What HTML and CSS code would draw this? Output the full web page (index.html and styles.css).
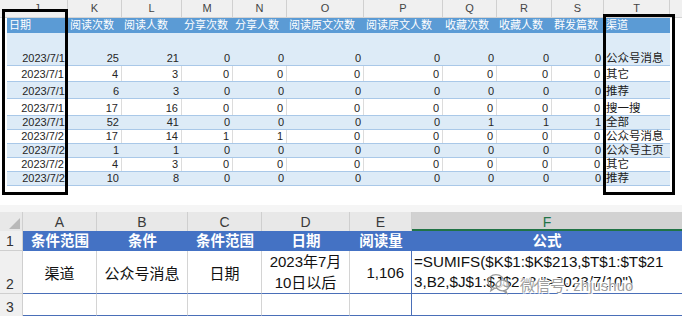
FILE: index.html
```html
<!DOCTYPE html>
<html lang="zh">
<head>
<meta charset="utf-8">
<title>Sheet</title>
<link rel="stylesheet" href="styles.css">
</head>
<body>
<div class="top">
  <div class="letters">
    <div class="lpad"></div>
    <div class="lc cj">J</div><div class="lc ck">K</div><div class="lc cl">L</div><div class="lc cm">M</div><div class="lc cn">N</div><div class="lc co">O</div><div class="lc cp">P</div><div class="lc cq">Q</div><div class="lc cr">R</div><div class="lc cs">S</div><div class="lc ct">T</div>
    <div class="lfill"></div>
  </div>
  <div class="trow hdr h15">
    <div class="c cj">日期</div><div class="c ck">阅读次数</div><div class="c cl">阅读人数</div><div class="c cm">分享次数</div><div class="c cn">分享人数</div><div class="c co">阅读原文次数</div><div class="c cp">阅读原文人数</div><div class="c cq">收藏次数</div><div class="c cr">收藏人数</div><div class="c cs">群发篇数</div><div class="c ct">渠道</div>
  </div>
  <div class="trow band h33">
    <div class="c cj">2023/7/1</div><div class="c ck">25</div><div class="c cl">21</div><div class="c cm">0</div><div class="c cn">0</div><div class="c co">0</div><div class="c cp">0</div><div class="c cq">0</div><div class="c cr">0</div><div class="c cs">0</div><div class="c ct txt">公众号消息</div>
  </div>
  <div class="trow plain h16">
    <div class="c cj">2023/7/1</div><div class="c ck">4</div><div class="c cl">3</div><div class="c cm">0</div><div class="c cn">0</div><div class="c co">0</div><div class="c cp">0</div><div class="c cq">0</div><div class="c cr">0</div><div class="c cs">0</div><div class="c ct txt">其它</div>
  </div>
  <div class="trow band h17">
    <div class="c cj">2023/7/1</div><div class="c ck">6</div><div class="c cl">3</div><div class="c cm">0</div><div class="c cn">0</div><div class="c co">0</div><div class="c cp">0</div><div class="c cq">0</div><div class="c cr">0</div><div class="c cs">0</div><div class="c ct txt">推荐</div>
  </div>
  <div class="trow plain h17">
    <div class="c cj">2023/7/1</div><div class="c ck">17</div><div class="c cl">16</div><div class="c cm">0</div><div class="c cn">0</div><div class="c co">0</div><div class="c cp">0</div><div class="c cq">0</div><div class="c cr">0</div><div class="c cs">0</div><div class="c ct txt">搜一搜</div>
  </div>
  <div class="trow band h14">
    <div class="c cj">2023/7/1</div><div class="c ck">52</div><div class="c cl">41</div><div class="c cm">0</div><div class="c cn">0</div><div class="c co">0</div><div class="c cp">0</div><div class="c cq">1</div><div class="c cr">1</div><div class="c cs">1</div><div class="c ct txt">全部</div>
  </div>
  <div class="trow plain h14">
    <div class="c cj">2023/7/2</div><div class="c ck">17</div><div class="c cl">14</div><div class="c cm">1</div><div class="c cn">1</div><div class="c co">0</div><div class="c cp">0</div><div class="c cq">0</div><div class="c cr">0</div><div class="c cs">0</div><div class="c ct txt">公众号消息</div>
  </div>
  <div class="trow band h14">
    <div class="c cj">2023/7/2</div><div class="c ck">1</div><div class="c cl">1</div><div class="c cm">0</div><div class="c cn">0</div><div class="c co">0</div><div class="c cp">0</div><div class="c cq">0</div><div class="c cr">0</div><div class="c cs">0</div><div class="c ct txt">公众号主页</div>
  </div>
  <div class="trow plain h14">
    <div class="c cj">2023/7/2</div><div class="c ck">4</div><div class="c cl">3</div><div class="c cm">0</div><div class="c cn">0</div><div class="c co">0</div><div class="c cp">0</div><div class="c cq">0</div><div class="c cr">0</div><div class="c cs">0</div><div class="c ct txt">其它</div>
  </div>
  <div class="trow band h14">
    <div class="c cj">2023/7/2</div><div class="c ck">10</div><div class="c cl">8</div><div class="c cm">0</div><div class="c cn">0</div><div class="c co">0</div><div class="c cp">0</div><div class="c cq">0</div><div class="c cr">0</div><div class="c cs">0</div><div class="c ct txt">推荐</div>
  </div>
  <div class="mark mark-j"></div>
  <div class="mark mark-t"></div>
</div>

<div class="bottom">
  <div class="strip"></div>
  <div class="bhead">
    <div class="corner"><span class="tri"></span></div>
    <div class="bl ba">A</div><div class="bl bb">B</div><div class="bl bc">C</div><div class="bl bd">D</div><div class="bl be">E</div><div class="bl bf sel">F</div>
  </div>
  <div class="brow r1">
    <div class="rn">1</div>
    <div class="bc-h ba">条件范围</div><div class="bc-h bb">条件</div><div class="bc-h bc">条件范围</div><div class="bc-h bd">日期</div><div class="bc-h be">阅读量</div><div class="bc-h bf">公式</div>
  </div>
  <div class="brow r2">
    <div class="rn">2</div>
    <div class="bcell ba">渠道</div><div class="bcell bb">公众号消息</div><div class="bcell bc">日期</div><div class="bcell bd two">2023年7月<br>10日以后</div><div class="bcell be num">1,106</div><div class="bcell bf formula">=SUMIFS($K$1:$K$213,$T$1:$T$21<br>3,B2,$J$1:$J$213,"&gt;2023/7/10")</div>
  </div>
  <div class="brow r3">
    <div class="rn">3</div>
    <div class="bcell ba"></div><div class="bcell bb"></div><div class="bcell bc"></div><div class="bcell bd"></div><div class="bcell be"></div><div class="bcell bf"></div>
  </div>
  <div class="watermark">
    <svg class="wm-icon" width="24" height="22" viewBox="0 0 24 22" fill="none" stroke="#9a9a9a" stroke-width="1.3">
      <ellipse cx="9" cy="8.5" rx="8" ry="6.8"/>
      <path d="M4.8 14.2 L3.8 17.8 L7.8 15.2"/>
      <ellipse cx="15.5" cy="12.5" rx="6.5" ry="5.4" fill="rgba(255,255,255,0.6)"/>
      <path d="M18.6 17.2 L19.8 20.2 L16.2 17.8"/>
    </svg>
    <span class="wm-text">微信号: zhjushuo</span>
  </div>
</div>
</body>
</html>
```

FILE: styles.css
```css
html, body {
  margin: 0;
  padding: 0;
  background: #ffffff;
}
body {
  width: 682px;
  height: 317px;
  overflow: hidden;
  font-family: "Liberation Sans", "Noto Sans CJK SC", sans-serif;
  color: #262626;
}

/* ---------- top sheet ---------- */
.top {
  position: relative;
  height: 186px;
}
.letters {
  display: flex;
  height: 18px;
  background: #f0f0f0;
  border-bottom: 1px solid #d4d4d4;
  box-sizing: border-box;
  font-size: 11px;
  color: #444;
}
.lpad { width: 7px; }
.lfill { flex: 1; }
.lc {
  box-sizing: border-box;
  border-right: 1px solid #d0d0d0;
  text-align: center;
  line-height: 17px;
}
.cj { width: 61px; }
.ck { width: 54px; }
.cl { width: 60px; }
.cm { width: 51px; }
.cn { width: 54px; }
.co { width: 77px; }
.cp { width: 79px; }
.cq { width: 54px; }
.cr { width: 55px; }
.cs { width: 52px; }
.ct { width: 66px; }

.trow {
  display: flex;
  margin-left: 7px;
  width: 663px;
  box-sizing: border-box;
  border-bottom: 1px solid #a9c8e8;
  font-size: 11px;
}
.h15 { height: 15px; border-bottom: none; }
.h33 { height: 33px; }
.h16 { height: 16px; }
.h17 { height: 17px; }
.h14 { height: 14px; }

.trow .c {
  box-sizing: border-box;
  display: flex;
  align-items: flex-end;
  justify-content: flex-end;
  padding: 0 3px 0 2px;
  line-height: 13px;
  white-space: nowrap;
}
.trow .c.txt {
  justify-content: flex-start;
  font-size: 11.5px;
  padding-left: 2px;
  color: #1a1a1a;
}
.hdr {
  background: #5b9bd5;
  color: #ffffff;
}
.hdr .c {
  justify-content: flex-start;
  align-items: center;
  font-size: 11px;
  padding-left: 2px;
}
.band { background: #ddebf7; }
.plain { background: #ffffff; }
.plain .c { border-right: 1px solid #dcdcdc; }
.plain .c.ct { border-right: none; }

.mark {
  position: absolute;
  border: 3px solid #000;
  box-sizing: border-box;
}
.mark-j { left: 2px; top: 9px; width: 66px; height: 186px; }
.mark-t { left: 603px; top: 14px; width: 72px; height: 181px; }

/* ---------- bottom sheet ---------- */
.bottom {
  position: relative;
  margin-top: 19px;
  font-family: "Liberation Sans", "Noto Sans CJK SC", sans-serif;
}
.strip {
  height: 7px;
  background: #f5f5f5;
}
.bhead {
  display: flex;
  height: 19px;
  background: #e8e8e8;
  font-size: 14px;
  color: #3a3a3a;
}
.corner {
  width: 23px;
  box-sizing: border-box;
  border-right: 1px solid #cfcfcf;
  position: relative;
}
.tri {
  position: absolute;
  right: 2px;
  bottom: 2px;
  width: 0;
  height: 0;
  border-left: 11px solid transparent;
  border-bottom: 11px solid #b9b9b9;
}
.bl {
  box-sizing: border-box;
  border-right: 1px solid #cfcfcf;
  text-align: center;
  line-height: 21px;
}
.bl.sel {
  background: #d2d2d2;
  color: #217346;
  border-bottom: 2px solid #217346;
  border-right: none;
}
.ba { width: 74px; }
.bb { width: 91px; }
.bc { width: 74px; }
.bd { width: 88px; }
.be { width: 62px; }
.bf { width: 270px; }

.brow {
  display: flex;
}
.rn {
  width: 23px;
  box-sizing: border-box;
  background: #f0f0f0;
  border-right: 1px solid #cfcfcf;
  font-size: 14px;
  color: #333;
  display: flex;
  align-items: flex-end;
  padding-left: 6px;
  line-height: 17px;
}
.r1 { height: 20px; }
.r2 { height: 43px; }
.r3 { height: 22px; }
.r1 .rn, .r2 .rn { border-bottom: 1px solid #cfcfcf; }

.bc-h {
  box-sizing: border-box;
  background: #4472c4;
  color: #ffffff;
  font-weight: bold;
  font-size: 14.5px;
  text-align: center;
  line-height: 20px;
}
.bcell {
  box-sizing: border-box;
  border-right: 1px solid #d4d4d4;
  border-bottom: 1px solid #4a6fb8;
  font-size: 15px;
  color: #111;
  display: flex;
  align-items: center;
  justify-content: center;
  text-align: center;
}
.bcell.two { line-height: 21px; }
.bcell.num { justify-content: flex-end; padding-right: 7px; }
.bcell.be { border-right: 1px solid #4a6fb8; }
.bcell.bf { border-right: none; }
.bcell.formula {
  justify-content: flex-start;
  text-align: left;
  padding-left: 2px;
  font-size: 15.2px;
  line-height: 20px;
  white-space: nowrap;
  overflow: hidden;
}

.watermark {
  position: absolute;
  left: 487px;
  top: 68px;
  display: flex;
  align-items: center;
  gap: 9px;
}
.wm-text {
  font-size: 15px;
  color: rgba(140, 140, 140, 0.85);
  text-shadow: 0 0 1px #fff, 0 0 2px #fff, 1px 1px 0 #fff, -1px -1px 0 #fff;
}
```
